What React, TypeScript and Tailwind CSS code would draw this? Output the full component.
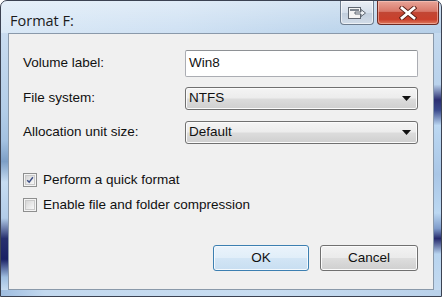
import React from "react";

const body = "font-['Liberation_Sans',Arial,sans-serif] text-[13.5px] text-[#111]";

function Select({ value }: { value: string }) {
  return (
    <div className="flex h-[23px] items-center justify-between rounded-[3px] border border-[#707070] bg-[linear-gradient(#f4f4f4_0%,#ececec_48%,#dcdcdc_52%,#cfcfcf_100%)] pl-[3px] pr-[5px] shadow-[inset_0_0_0_1px_#fbfbfb]">
      <span>{value}</span>
      <svg width="10" height="6" viewBox="0 0 10 6">
        <path d="M0 0h9L4.5 5z" fill="#111" />
      </svg>
    </div>
  );
}

function Checkbox({ checked, label }: { checked: boolean; label: string }) {
  return (
    <label className="flex h-[14px] items-center gap-[6px] leading-[14px]">
      <span className="flex h-[14px] w-[14px] items-center justify-center border border-[#8e8f8f] bg-[#f4f4f4] p-[1px]">
        <span className="flex h-full w-full items-center justify-center border border-[#c9c9c9] bg-[linear-gradient(135deg,#d6d6d6,#f8f8f8)]">
          {checked && (
            <svg width="10" height="10" viewBox="0 0 10 10">
              <path d="M1.5 5.2 L4 7.8 L8.6 1.6" fill="none" stroke="#3d4f86" strokeWidth="1.8" />
            </svg>
          )}
        </span>
      </span>
      <span>{label}</span>
    </label>
  );
}

export default function App() {
  return (
    <div className="h-[297px] w-[442px] overflow-hidden bg-white">
      <div className="flex h-full flex-col overflow-hidden rounded-t-[7px] border border-[#3b4252] bg-[linear-gradient(90deg,#d9e8f6_0%,#cfe1f3_40%,#bdd5ec_75%,#b6cfe8_100%)]">
        {/* title bar */}
        <div className="flex h-[32px] bg-[linear-gradient(180deg,rgba(255,255,255,0.35),rgba(255,255,255,0))]">
          <span className="pl-[9px] pt-[9px] font-['Segoe_UI','Open_Sans',sans-serif] text-[14.5px] text-[#1b1b1b]">
            Format F:
          </span>
          <div className="ml-auto flex items-start gap-[3px] pr-[2px]">
            <div className="flex h-[24px] w-[34px] items-center justify-center rounded-b-[4px] border border-t-0 border-[#6f7d8e] bg-[linear-gradient(#e9eef5_0%,#d5dfeb_50%,#c1cedd_52%,#d2dce8_100%)] shadow-[inset_0_0_0_1px_rgba(255,255,255,0.6)]">
              <svg width="20" height="14" viewBox="0 0 20 14">
                <rect x="1.5" y="1.5" width="12" height="11" fill="#f4f4f4" stroke="#5f6670" />
                <rect x="3" y="3" width="9" height="2" fill="#7d858f" />
                <path d="M8 6h6V3.5l4.5 3.5-4.5 3.5V8H8z" fill="#eef1f5" stroke="#5f6670" strokeWidth="1" />
              </svg>
            </div>
            <div className="flex h-[24px] w-[62px] items-center justify-center rounded-b-[4px] border border-t-0 border-[#6e2a22] bg-[linear-gradient(#e8a598_0%,#d8786a_45%,#c24634_50%,#c9402c_80%,#de7a5e_100%)] shadow-[inset_0_0_0_1px_rgba(255,210,200,0.5)]">
              <svg width="18" height="14" viewBox="0 0 18 14">
                <path d="M3 2 L15 12 M15 2 L3 12" stroke="#5a1d14" strokeWidth="4.6" strokeLinecap="square" />
                <path d="M3 2 L15 12 M15 2 L3 12" stroke="#ffffff" strokeWidth="2.8" strokeLinecap="square" />
              </svg>
            </div>
          </div>
        </div>

        {/* middle: side frames and client area */}
        <div className="flex flex-1">
          <div className="w-[7px] bg-[linear-gradient(180deg,#c9dcf0_0%,#b3cde8_30%,#a3c1e1_42%,#7d9fc6_50%,#c6dcf2_58%,#b2cce8_72%,#27306e_80%,#1a2164_88%,#9fbee0_95%,#c6dbef_100%)]" />
          <div className={`flex flex-1 flex-col border border-[#8a99aa] bg-[#f0f0f0] pl-[14px] pr-[15px] pt-[16px] ${body}`}>
            <div className="grid grid-cols-[162px_1fr] items-center">
              <span>Volume label:</span>
              <div className="flex h-[27px] items-center rounded-[2px] border border-[#abadb3] border-t-[#8e9195] bg-white pl-[3px]">
                Win8
              </div>
            </div>
            <div className="mt-[10px] grid grid-cols-[162px_1fr] items-center">
              <span>File system:</span>
              <Select value="NTFS" />
            </div>
            <div className="mt-[11px] grid grid-cols-[162px_1fr] items-center">
              <span>Allocation unit size:</span>
              <Select value="Default" />
            </div>

            <div className="mt-[29px] flex flex-col gap-[11px]">
              <Checkbox checked label="Perform a quick format" />
              <Checkbox checked={false} label="Enable file and folder compression" />
            </div>

            <div className="mt-[33px] flex justify-end gap-[11px]">
              <button className="h-[26px] w-[96px] rounded-[3px] border border-[#3c7fb1] bg-[linear-gradient(#eaf3fb_0%,#e1eef9_48%,#d2e5f5_52%,#c8def1_100%)] shadow-[inset_0_0_0_1px_#f4f9fd]">
                OK
              </button>
              <button className="h-[26px] w-[98px] rounded-[3px] border border-[#707070] bg-[linear-gradient(#f2f2f2_0%,#ebebeb_48%,#dddddd_52%,#cfcfcf_100%)] shadow-[inset_0_0_0_1px_#fbfbfb]">
                Cancel
              </button>
            </div>
          </div>
          <div className="w-[7px] bg-[linear-gradient(180deg,#c4d9ee_0%,#b9d2ec_20%,#2c2f72_26%,#3a4a8c_30%,#bcd8f2_36%,#a9c6e6_55%,#bcd8f2_70%,#7f9ccb_76%,#262a6c_80%,#b8d4ef_86%,#c4daf0_100%)]" />
        </div>

        {/* bottom frame */}
        <div className="h-[6px] bg-[linear-gradient(90deg,#9fbde0_0%,#c3d9ef_10%,#c8ddf1_60%,#b9d1ea_100%)]" />
      </div>
    </div>
  );
}
